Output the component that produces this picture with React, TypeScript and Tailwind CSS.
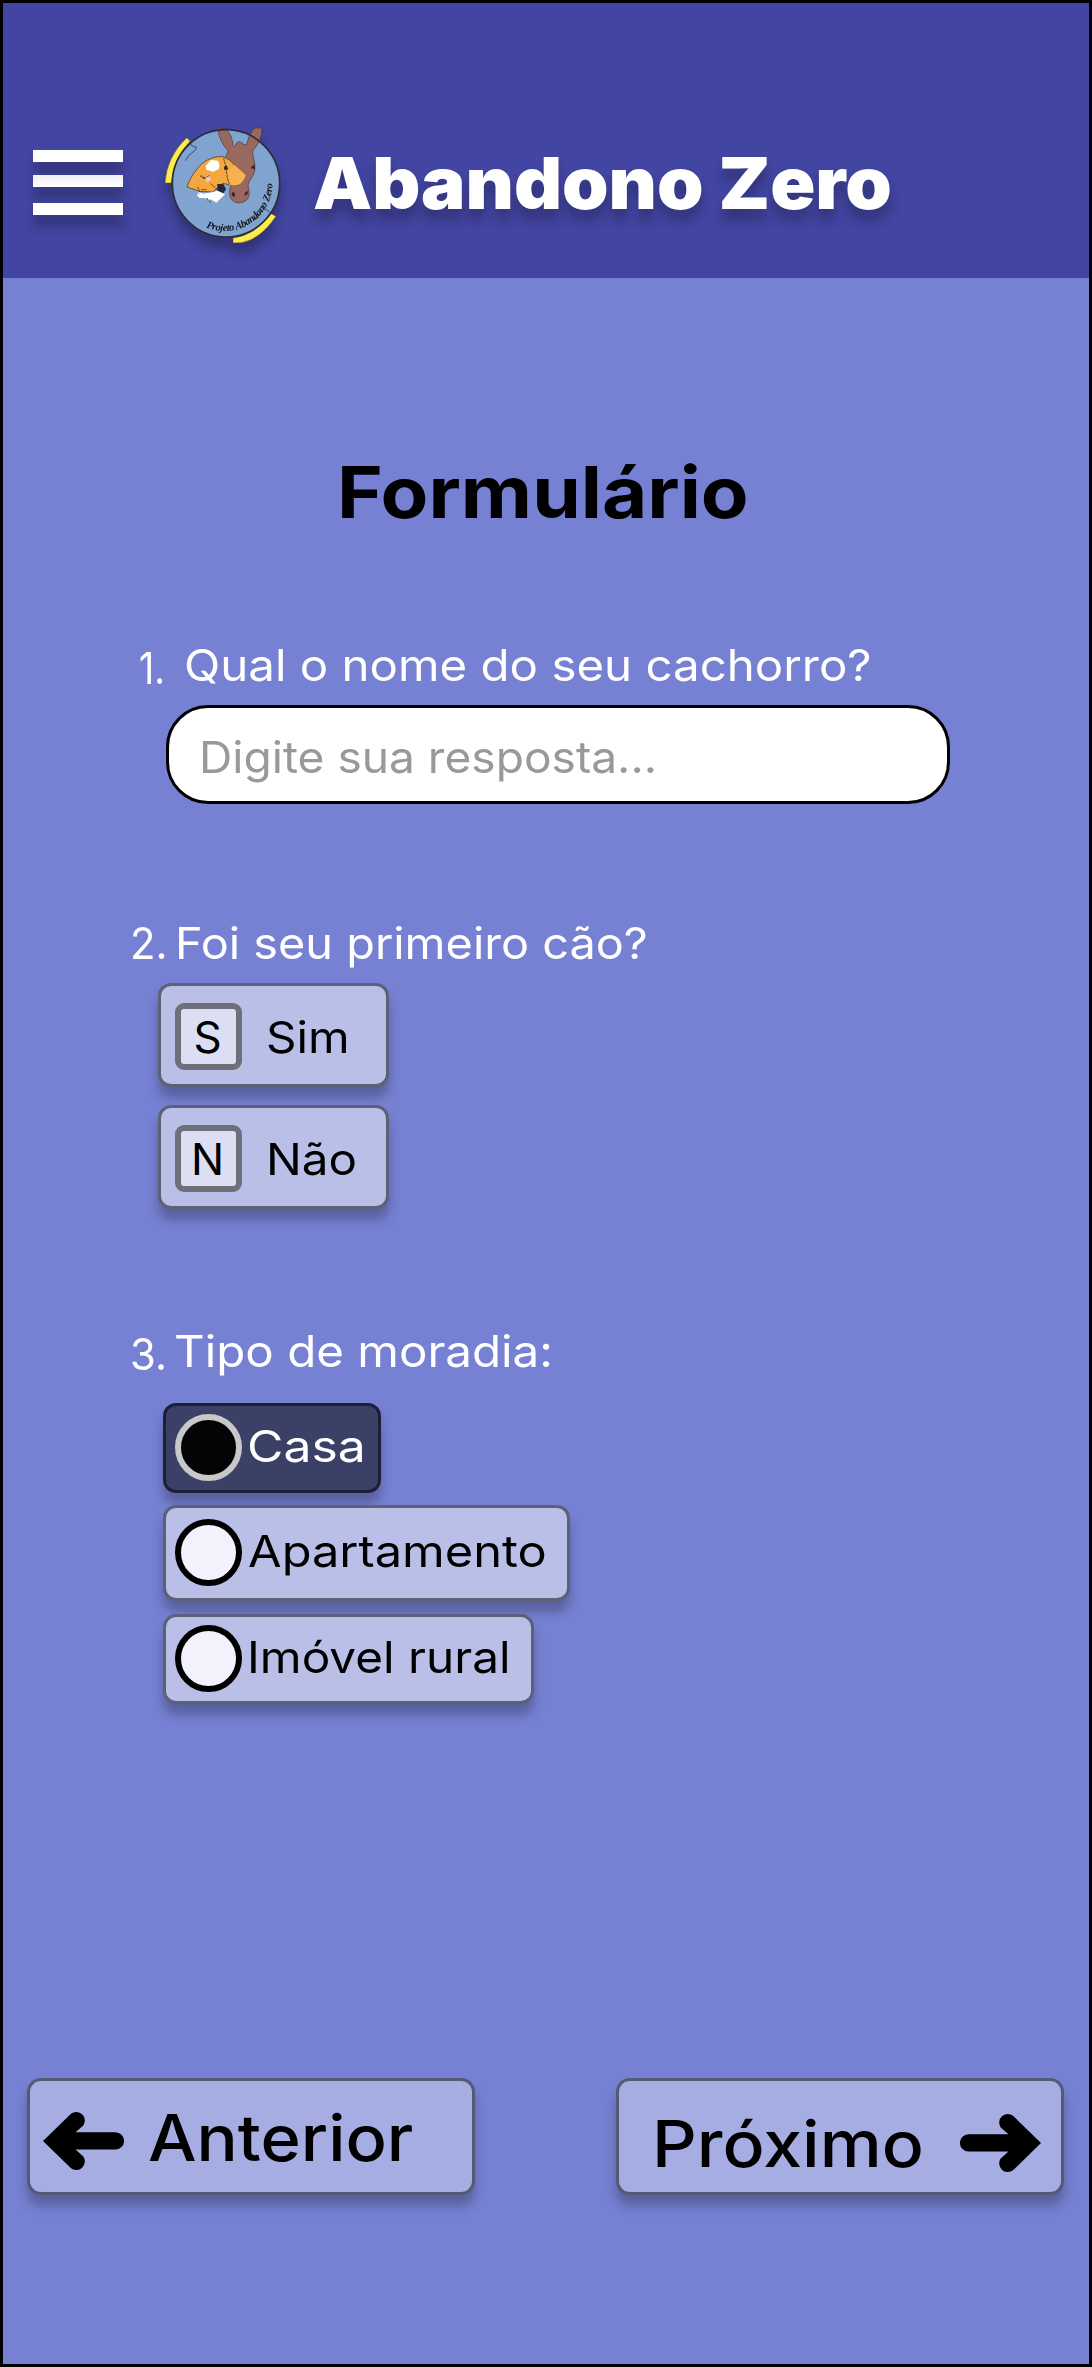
import React from "react";

const shadow = "shadow-[0_11px_11px_rgba(0,0,0,0.25)]";

function Logo() {
  return (
    <svg
      viewBox="21 15 390 390"
      className="ml-[34px] mt-[117px] h-[130px] w-[130px] shrink-0 overflow-visible drop-shadow-[0_11px_5px_rgba(0,0,0,0.25)]"
    >
      <defs>
        <path id="motto" d="M168 337 A144 144 0 0 0 367 192" />
      </defs>
      <circle cx="228" cy="205" r="161" fill="#80a3cf" />
      <path d="M45 204 Q50 125 110 68 L121 78 Q72 128 64 204Z" fill="#fdec4b" stroke="#4a4a35" strokeWidth="1.5" />
      <path d="M249 369 Q314 361 364 296 L378 304 Q333 372 275 383 L249 384Z" fill="#fdec4b" stroke="#4a4a35" strokeWidth="1.5" />
      <path
        d="M203 39 L227 41 Q247 60 249 92 Q252 97 256 91 Q258 82 267 80 Q279 82 282 90 L291 87 Q296 57 315 39 L336 39 Q336 77 309 106 Q307 118 310 126 Q315 142 315 162 Q313 180 304 189 Q294 202 294 213 Q302 238 293 252 Q283 264 263 264 Q243 259 239 241 Q237 225 243 211 L241 178 L226 128 L235 108 Q207 79 203 39Z"
        fill="#99695f"
        stroke="#4c3436"
        strokeWidth="2"
      />
      <path d="M301 159 L313 148 L315 163Z M244 236 Q251 224 256 240 Q251 252 244 236Z M283 242 Q285 228 294 229 Q294 242 283 242Z" fill="#30282d" />
      <path
        d="M111 216 Q123 178 157 145 Q187 122 219 125 Q242 132 253 150 L288 180 Q286 192 270 208 Q255 214 238 209 L218 205 L188 231 L149 229Z"
        fill="#f5a63f"
        stroke="#3c2b20"
        strokeWidth="2"
      />
      <path d="M254 150 L288 180 Q286 192 270 208 Q255 214 238 209 Q236 186 232 166Z" fill="#f6b152" />
      <path d="M167 152 L183 135 L203 137 Q211 147 206 163 L189 170 L169 164Z" fill="#fff" />
      <path d="M202 207 L220 207 L228 223 L220 235 L202 229Z" fill="#25272c" />
      <path d="M186 232 L203 227 L225 238 L199 263 L182 253 L173 257 L164 249 L148 249 L140 239 L148 230 L158 236Z" fill="#fff" />
      <path d="M140 239 L148 230 L150 239Z" fill="#f3c0cd" />
      <path d="M175 178 L183 194 L171 203 L166 188Z" fill="#f6c5c8" />
      <path d="M222 157 L229 150 L235 163 L223 165Z" fill="#232529" />
      <path
        d="M150 184 Q159 180 160 191 M163 191 L178 181 M143 216 L150 232 M155 224 L169 224 M182 206 L201 223 M221 130 Q227 152 230 174 Q233 198 240 209 M173 257 L170 249 L182 263 M157 188 L166 188"
        fill="none"
        stroke="#252326"
        strokeWidth="2.3"
        strokeDasharray="8 2"
      />
      <circle cx="228" cy="205" r="161" fill="none" stroke="#2b2d38" strokeWidth="5" />
      <path d="M119 80 L124 91 L139 97 L136 105 L116 122 L106 137 M312 314 L344 281 L359 291 L375 299 M312 314 L326 307" fill="none" stroke="#30374a" strokeWidth="2.5" />
      <text fontFamily="Liberation Serif, serif" fontStyle="italic" fontWeight="700" fontSize="31" fill="#15171d">
        <textPath href="#motto" textLength="282">Projeto Abandono Zero</textPath>
      </text>
    </svg>
  );
}

function Arrow({ className }: { className: string }) {
  return (
    <svg viewBox="0 0 81 60" className={className}>
      <path d="M0 30 L28 2.7 A8.6 8.6 0 0 1 40.3 14.4 L32.5 21.3 H72.4 A8.6 8.6 0 0 1 72.4 38.6 H32.5 L40.3 45.6 A8.6 8.6 0 0 1 28 57.3Z" />
    </svg>
  );
}

function Question({ n, text, num, body }: { n: string; text: string; num: string; body: string }) {
  return (
    <div className="flex h-11 whitespace-nowrap text-[44px] leading-[44px] text-white">
      <span className={`origin-left ${num}`}>{n}</span>
      <h2 className={`origin-left ${body}`}>{text}</h2>
    </div>
  );
}

function KeyOption({ k, label }: { k: string; label: string }) {
  return (
    <button
      className={`flex h-[104px] w-[231px] items-start rounded-[13px] border-3 border-[#5d6178] bg-[#babfe8] pl-[14px] text-[44px] leading-[44px] ${shadow}`}
    >
      <span className="mt-[17px] h-[67px] w-[67px] shrink-0 rounded-[9px] border-6 border-[#6d7078] bg-[#dcdff4] pr-[2px] pt-[6px] text-center">
        {k}
      </span>
      <span className="ml-6 mt-[29px] origin-left scale-x-[1.08]">{label}</span>
    </button>
  );
}

function RadioOption({ label, box, dot, text }: { label: string; box: string; dot: string; text: string }) {
  return (
    <button
      className={`flex items-start whitespace-nowrap rounded-[13px] border-3 pl-[9px] text-[44px] leading-[44px] ${box} ${shadow}`}
    >
      <span className={`h-[67px] w-[67px] shrink-0 rounded-full border-6 ${dot}`} />
      <span className={`origin-left ${text}`}>{label}</span>
    </button>
  );
}

export default function App() {
  return (
    <div className="h-[2367px] w-[1092px] overflow-hidden border-3 border-black bg-[#7681d3] font-['Inter',sans-serif] text-black">
      <header className="flex h-[275px] items-start bg-[#4245a1] pl-[30px]">
        <button className="mt-[147px] flex h-[65px] w-[90px] shrink-0 flex-col">
          <span className={`h-3 w-full bg-white ${shadow}`} />
          <span className={`mt-[13px] h-3 w-full bg-linear-to-b from-[#efeff4] to-white ${shadow}`} />
          <span className={`mt-4 h-3 w-full bg-white ${shadow}`} />
        </button>
        <Logo />
        <span className="ml-[26px] mt-[144px] origin-left scale-x-[1.035] whitespace-nowrap text-[72px] font-black leading-[72px] text-white [text-shadow:0_11px_11px_rgba(0,0,0,0.25)]">
          Abandono Zero
        </span>
      </header>

      <main>
        <h1 className="ml-[334px] mt-[178px] origin-left scale-x-[1.1] text-[71px] font-bold leading-[72px]">Formulário</h1>

        <section className="mt-[115px]">
          <Question
            n="1."
            text="Qual o nome do seu cachorro?"
            num="ml-[136px] w-[45px] scale-x-[0.85] pt-[3px]"
            body="scale-x-[1.078]"
          />
          <div className="ml-[163px] mt-[18px] h-[99px] w-[784px] rounded-[42px] border-3 border-black bg-white pl-[30px] pt-[27px] text-[44px] leading-[44px] text-[#999999]">
            <span className="inline-block origin-left scale-x-[1.048] align-top">Digite sua resposta...</span>
          </div>
        </section>

        <section className="mt-[117px]">
          <Question
            n="2."
            text="Foi seu primeiro cão?"
            num="ml-[127px] w-[45px] scale-x-[0.95]"
            body="scale-x-[1.064]"
          />
          <div className="ml-[155px] mt-[18px] flex flex-col gap-[18px]">
            <KeyOption k="S" label="Sim" />
            <KeyOption k="N" label="Não" />
          </div>
        </section>

        <section className="mt-[120px]">
          <Question
            n="3."
            text="Tipo de moradia:"
            num="ml-[127px] w-[44px] scale-x-[0.95] pt-[3px]"
            body="scale-x-[1.08]"
          />
          <div className="ml-[160px] mt-[30px] flex flex-col items-start">
            <RadioOption
              label="Casa"
              box="h-[90px] w-[218px] border-[#1c1f38] bg-[#3b4067] text-white"
              dot="mt-2 border-[#c8c8c8] bg-[#040406]"
              text="ml-[5px] mt-[18px] scale-x-[1.134]"
            />
            <RadioOption
              label="Apartamento"
              box="mt-3 h-[96px] w-[407px] border-[#5d6178] bg-[#babfe8]"
              dot="mt-[11px] border-black bg-[#f1f2fb]"
              text="ml-[6px] mt-[21px] scale-x-[1.108]"
            />
            <RadioOption
              label="Imóvel rural"
              box="mt-[13px] h-[90px] w-[371px] border-[#5d6178] bg-[#babfe8]"
              dot="mt-2 border-black bg-[#f1f2fb]"
              text="ml-[5px] mt-[18px] scale-x-[1.085]"
            />
          </div>
        </section>
      </main>

      <nav className="mt-[374px] flex justify-between pl-6 pr-[25px]">
        <button
          className={`flex h-[117px] w-[448px] items-start rounded-[14px] border-3 border-[#545974] bg-[#a6ade3] pl-[13px] text-[64px] font-medium leading-[64px] ${shadow}`}
        >
          <Arrow className="mt-[30px] h-[60px] w-[81px] shrink-0" />
          <span className="ml-6 mt-[25px] origin-left scale-x-[1.071]">Anterior</span>
        </button>
        <button
          className={`flex h-[117px] w-[448px] items-start justify-between rounded-[14px] border-3 border-[#545974] bg-[#a6ade3] pl-[33px] pr-5 text-[64px] font-medium leading-[64px] ${shadow}`}
        >
          <span className="mt-[31px] origin-left scale-x-[1.091]">Próximo</span>
          <Arrow className="mt-[32px] h-[60px] w-[81px] shrink-0 -scale-x-100" />
        </button>
      </nav>
    </div>
  );
}
